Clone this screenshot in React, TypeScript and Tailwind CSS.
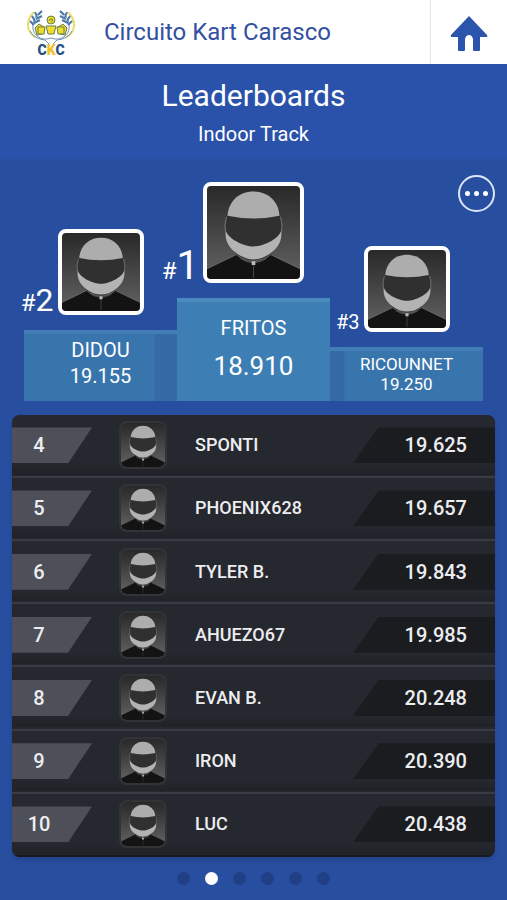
import React from "react";
import { useState } from "react";

type Racer = { rank: number; name: string; time: string };

const racers: Racer[] = [
  { rank: 4, name: "SPONTI", time: "19.625" },
  { rank: 5, name: "PHOENIX628", time: "19.657" },
  { rank: 6, name: "TYLER B.", time: "19.843" },
  { rank: 7, name: "AHUEZO67", time: "19.985" },
  { rank: 8, name: "EVAN B.", time: "20.248" },
  { rank: 9, name: "IRON", time: "20.390" },
  { rank: 10, name: "LUC", time: "20.438" },
];

const tracks = ["Track 1", "Track 2", "Track 3", "Track 4", "Track 5", "Track 6"];

function Helmet({ className }: { className: string }) {
  return (
    <svg
      viewBox="0 0 100 100"
      aria-hidden="true"
      className={`bg-linear-to-b from-[#292929] to-[#646464] ${className}`}>
      <path d="M0 89 L31 74 Q40 82 50 82 Q60 82 69 74 L100 89 V100 H0Z" fill="#131313" />
      <path d="M0 89 L31 74 M69 74 L100 89" stroke="#6c6c6c" strokeWidth="1" fill="none" />
      <path
        d="M50 6 C68 6 78 18 79 34 L80 50 C80 62 73 70 64 76 Q50 84 36 76 C27 70 20 62 20 50 L21 34 C22 18 32 6 50 6Z"
        fill="#303030"
      />
      <path
        d="M50 6 C66 6 77 17 78 32 Q64 35 50 35 Q36 35 22 32 C23 17 34 6 50 6Z"
        fill="#adadad"
      />
      <path
        d="M20 47 C22 57 40 65 50 65 C60 65 78 57 80 47 C81 60 76 66 70 71 Q60 79 50 79 Q40 79 30 71 C24 66 19 60 20 47Z"
        fill="#b3b3b3"
      />
      <path d="M21 33 Q18 42 20 50 M79 33 Q82 42 80 50" stroke="#777" strokeWidth="1" fill="none" />
      <path d="M36 78 Q50 87 64 78" stroke="#555" strokeWidth="1" fill="none" />
      <path d="M50 84 V99" stroke="#4a4a4a" strokeWidth="1" />
      <path d="M48 81 H52 V85 H48Z" fill="#bbb" />
    </svg>
  );
}

function Logo() {
  return (
    <a href="#home" aria-label="CKC" className="flex w-12 flex-col items-center">
      <svg viewBox="0 0 48 36" className="h-9 w-12" aria-hidden="true" fill="none">
        <g stroke="#ecd96a" strokeWidth="2" strokeLinecap="round">
          <path d="M6 4 C-1 12 -1 22 8 28" />
          <path d="M42 4 C49 12 49 22 40 28" />
        </g>
        <g stroke="#6f93b8" strokeWidth="1">
          <path d="M14 2 C5 9 3 21 10 27 Q16 32 24 29 Q32 32 38 27 C45 21 43 9 34 2" />
          <path d="M3 22 Q7 30 18 31 L22 35 M26 35 L30 31 Q41 30 45 22" />
        </g>
        <g stroke="#4a78a8" strokeWidth="2">
          <path d="M15 2 L11 6 M8 3 L10 8 M15 7 L9 10 M5 7 L8 12 M13 11 L7 14 M3 12 L7 16" />
          <path d="M33 2 L37 6 M40 3 L38 8 M33 7 L39 10 M43 7 L40 12 M35 11 L41 14 M45 12 L41 16" />
        </g>
        <g fill="#efdc2b" stroke="#6b7f4e" strokeWidth="1">
          <circle cx="24" cy="11" r="4" />
          <path d="M19 17 L29 17 L27 25 L21 25Z" />
          <path d="M8 19 L12 15 L17 18 L15 25 L10 26Z" />
          <path d="M40 19 L36 15 L31 18 L33 25 L38 26Z" />
          <path d="M11 18 H18 L17 25 H11Z M30 18 H37 V25 H31Z" />
        </g>
        <path d="M22 12 Q23 9 25 10 Q27 12 24 13" stroke="#6b7f4e" strokeWidth="1" />
      </svg>
      <span className="text-sm leading-[11px] font-black text-[#1f4f86]">
        C<span className="text-[#f2c224]">K</span>C
      </span>
    </a>
  );
}

type PodiumProps = {
  rank: string;
  racer: string;
  time: string;
  rankClass: string;
  avatarClass: string;
  boxClass: string;
  nameClass: string;
  timeClass: string;
};

function PodiumPlace(p: PodiumProps) {
  return (
    <li className="min-w-0">
      <div className="grid grid-cols-[minmax(0,1fr)_auto_minmax(0,1fr)] items-end">
        <span className="flex items-baseline justify-end pr-1 text-white">
          <span className={p.rank === "3" ? "text-xl leading-5" : "text-2xl leading-6"}>#</span>
          <span className={p.rankClass}>{p.rank}</span>
        </span>
        <Helmet className={`rounded-lg border-4 border-white ${p.avatarClass}`} />
      </div>
      <div
        className={`mt-[15px] flex flex-col items-center border-t-4 text-white ${p.boxClass}`}>
        <span className={p.nameClass}>{p.racer}</span>
        <span className={p.timeClass}>{p.time}</span>
      </div>
    </li>
  );
}

export default function App() {
  const [active, setActive] = useState<number>(1);

  return (
    <div className="flex min-h-screen flex-col bg-[#284e9f] font-['Roboto',sans-serif]">
      <header className="flex h-16 items-stretch bg-white">
        <div className="flex w-[102px] items-center justify-center">
          <Logo />
        </div>
        <h1 className="flex flex-1 items-center pl-[2px] text-2xl text-[#3350a2]">
          Circuito Kart Carasco
        </h1>
        <a
          href="#home"
          aria-label="Home"
          className="flex w-[77px] items-center justify-center border-l border-[#e4e5e8]">
          <svg viewBox="0 0 38 36" className="mt-1 h-9 w-[38px]" aria-hidden="true">
            <path
              d="M19 0 L37 19 Q38 21 36 21 H30 V34 Q30 35 29 35 H24 Q23 35 23 34 V23 Q22 19 19 19 Q16 19 15 23 V34 Q15 35 14 35 H9 Q8 35 8 34 V21 H2 Q0 21 1 19Z"
              fill="#2b54ac"
            />
          </svg>
        </a>
      </header>

      <div className="flex h-24 flex-col items-center border-b border-[#28509f] bg-[#2a52aa] pt-3 text-white">
        <h2 className="text-3xl leading-10">Leaderboards</h2>
        <p className="text-xl leading-9">Indoor Track</p>
      </div>

      <main className="relative flex flex-1 flex-col">
        <button
          type="button"
          aria-label="More options"
          className="absolute top-[15px] right-3 flex size-[37px] items-center justify-center gap-1 rounded-full border-2 border-[#dce6fa]">
          <span className="size-[5px] rounded-full bg-white" />
          <span className="size-[5px] rounded-full bg-white" />
          <span className="size-[5px] rounded-full bg-white" />
        </button>

        <ol className="grid grid-cols-3 items-end px-6 pt-[22px]">
          <PodiumPlace
            rank="2"
            racer="DIDOU"
            time="19.155"
            rankClass="text-[32px] leading-7"
            avatarClass="size-[86px]"
            boxClass="h-[71px] pt-1 border-[#427db5] bg-linear-to-r from-[#3975ad] from-85% to-[#356aa7] to-86%"
            nameClass="text-xl leading-6"
            timeClass="text-xl leading-7"
          />
          <PodiumPlace
            rank="1"
            racer="FRITOS"
            time="18.910"
            rankClass="text-[40px] leading-8"
            avatarClass="size-[101px]"
            boxClass="h-[103px] gap-1 pt-3 border-[#4b8abf] bg-[#3d7fb5]"
            nameClass="text-xl leading-7"
            timeClass="text-[26px] leading-10"
          />
          <PodiumPlace
            rank="3"
            racer="RICOUNNET"
            time="19.250"
            rankClass="text-xl leading-5"
            avatarClass="size-[86px]"
            boxClass="h-[54px] pt-[3px] border-[#427db5] bg-linear-to-l from-[#3975ad] from-90% to-[#356aa7] to-91%"
            nameClass="text-[17px] leading-5"
            timeClass="text-[17px] leading-5"
          />
        </ol>

        <div className="mx-3 mt-[14px] overflow-hidden rounded-lg bg-[#262931] shadow-md">
          <table
            aria-label="Indoor Track ranking"
            className="h-[442px] w-full table-fixed border-collapse text-xl font-medium text-[#ededf0]">
            <colgroup>
              <col className="w-20" />
              <col className="w-[103px]" />
              <col />
              <col className="w-[142px]" />
            </colgroup>
            <tbody>
              {racers.map((r) => (
                <tr
                  key={r.rank}
                  className="border-b-2 border-[#383b43] bg-linear-to-b from-[#25282e] from-80% to-[#202228] last:border-[#171a21]">
                  <td className="p-0">
                    <div className="relative h-9">
                      <div className="h-9 bg-[#4d5059] [clip-path:polygon(0_0,100%_0,70%_100%,0_100%)]" />
                      <span className="absolute inset-y-0 left-0 w-[54px] text-center leading-9">
                        {r.rank}
                      </span>
                    </div>
                  </td>
                  <td className="p-0">
                    <Helmet className="ml-[27px] size-12 rounded-lg border-2 border-[#323337]" />
                  </td>
                  <td className="p-0 text-lg">{r.name}</td>
                  <td className="p-0">
                    <div className="flex h-9 items-center justify-end bg-[#1a1c20] pr-7 [clip-path:polygon(18%_0,100%_0,100%_100%,0_100%)]">
                      {r.time}
                    </div>
                  </td>
                </tr>
              ))}
            </tbody>
          </table>
        </div>

        <nav aria-label="Tracks" className="mt-[15px] flex justify-center gap-[15px] pb-3">
          {tracks.map((track, i) => (
            <button
              key={track}
              type="button"
              aria-label={track}
              onClick={() => setActive(i)}
              className={`size-[13px] cursor-pointer rounded-full ${
                active === i ? "bg-white" : "bg-[#203f85]"
              }`}
            />
          ))}
        </nav>
      </main>
    </div>
  );
}
